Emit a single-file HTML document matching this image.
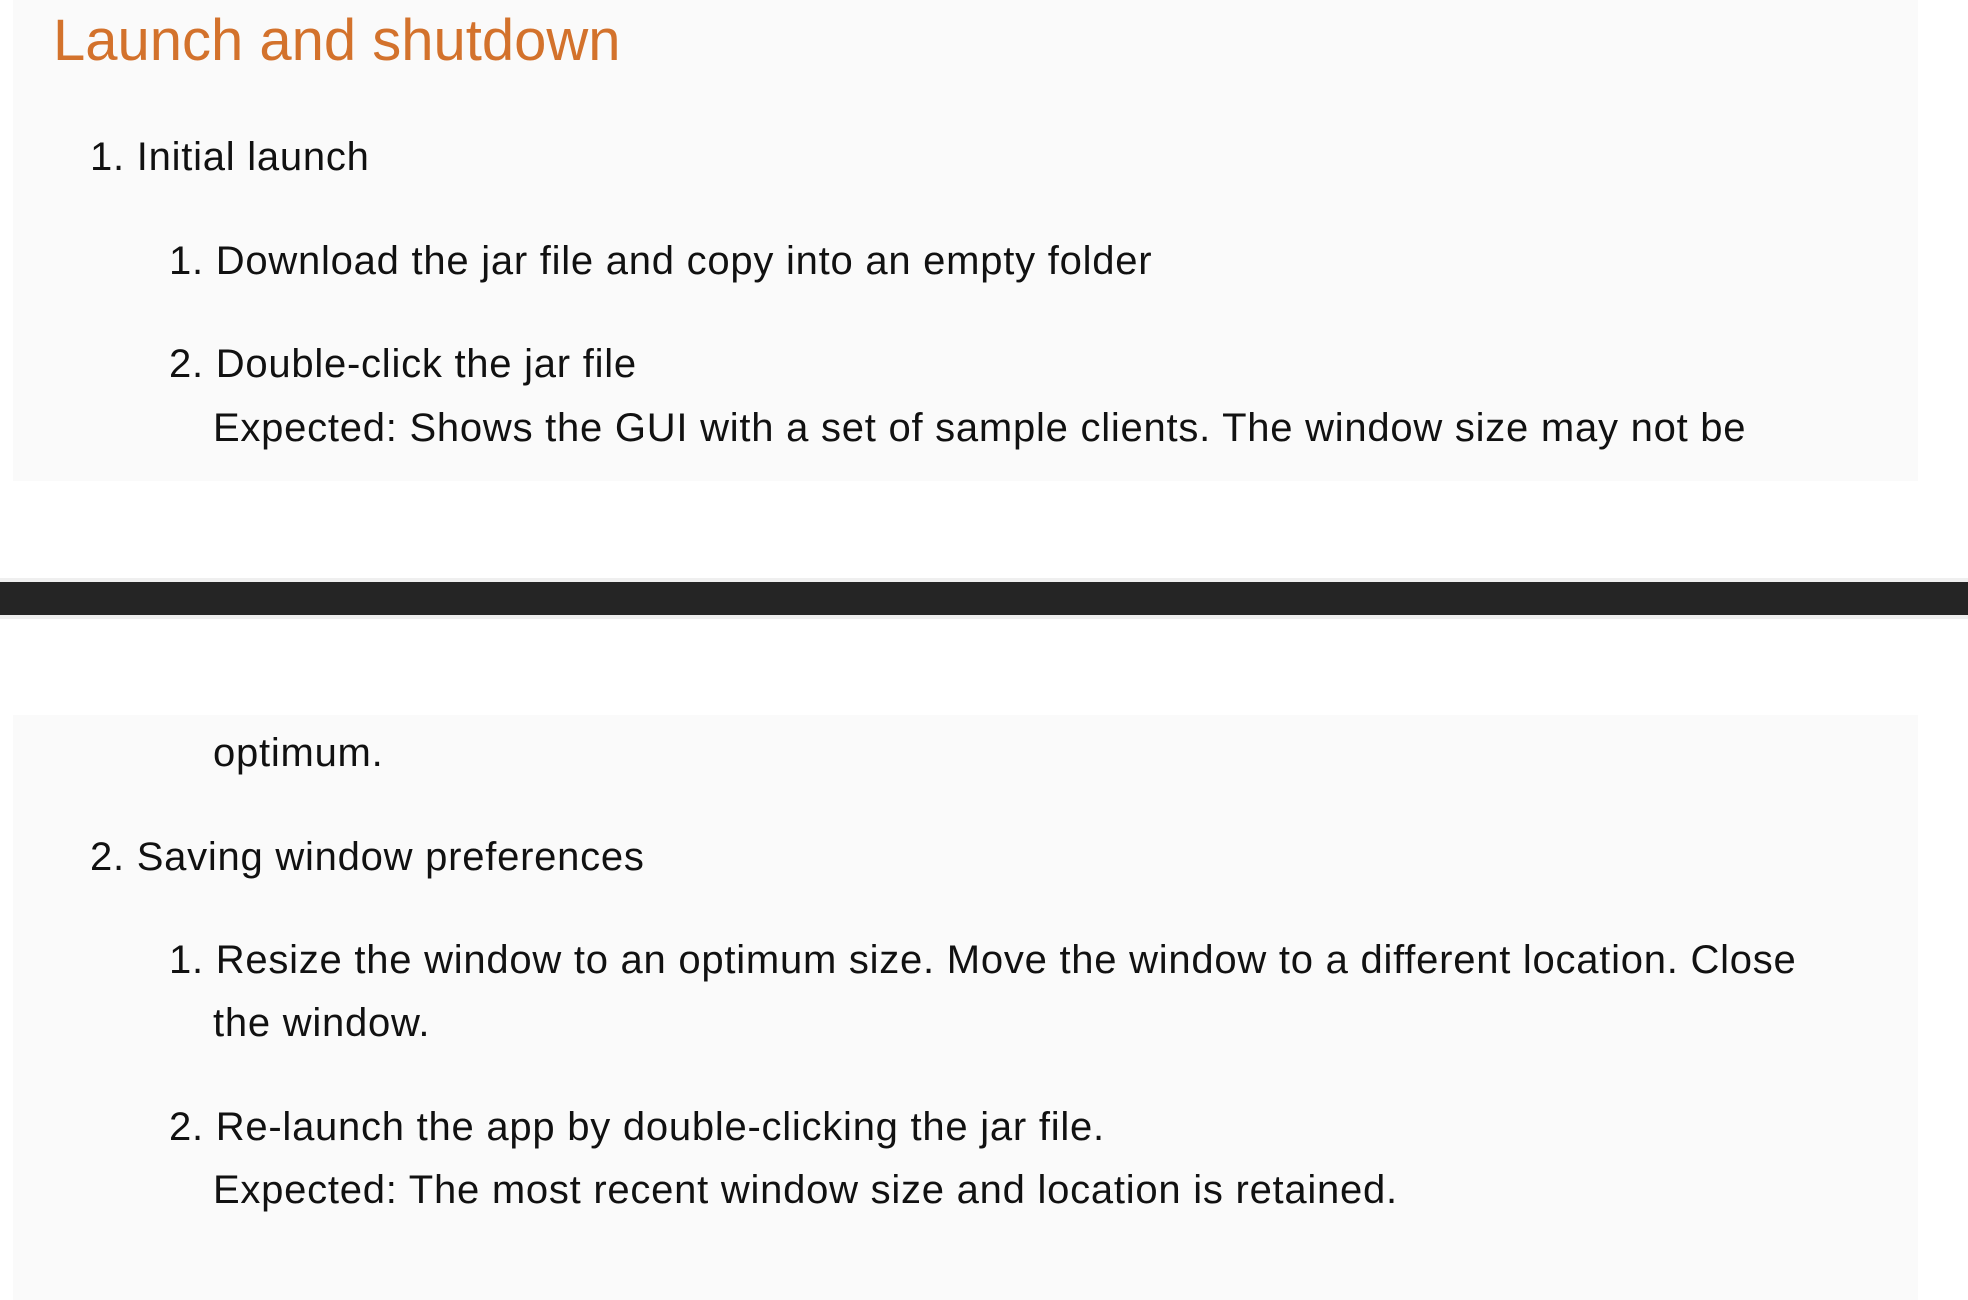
<!DOCTYPE html>
<html><head><style>
html,body{margin:0;padding:0;width:1968px;height:1300px;background:#fff;overflow:hidden;font-family:"Liberation Sans",sans-serif;color:#111}
.p{position:absolute;left:13px;width:1905px;background:#fafafa}
.t{position:absolute;white-space:nowrap;font-size:40px;line-height:50px;letter-spacing:0.75px}
</style></head><body>
<div class="p" style="top:0;height:481px"></div>
<div style="position:absolute;left:0;top:578px;width:1968px;height:41px;background:#efefef"></div>
<div style="position:absolute;left:0;top:582px;width:1968px;height:33px;background:#252525"></div>
<div class="p" style="top:715px;height:585px"></div>

<div class="t" style="left:53px;top:13px;font-size:58px;line-height:56px;letter-spacing:0;color:#d3722c">Launch and shutdown</div>
<div class="t" style="left:90px;top:132px">1. Initial launch</div>
<div class="t" style="left:169px;top:236px">1. Download the jar file and copy into an empty folder</div>
<div class="t" style="left:169px;top:339px">2. Double-click the jar file</div>
<div class="t" style="left:213px;top:403px">Expected: Shows the GUI with a set of sample clients. The window size may not be</div>

<div class="t" style="left:213px;top:728px">optimum.</div>
<div class="t" style="left:90px;top:832px">2. Saving window preferences</div>
<div class="t" style="left:169px;top:935px">1. Resize the window to an optimum size. Move the window to a different location. Close</div>
<div class="t" style="left:213px;top:998px">the window.</div>
<div class="t" style="left:169px;top:1102px">2. Re-launch the app by double-clicking the jar file.</div>
<div class="t" style="left:213px;top:1165px">Expected: The most recent window size and location is retained.</div>
</body></html>
